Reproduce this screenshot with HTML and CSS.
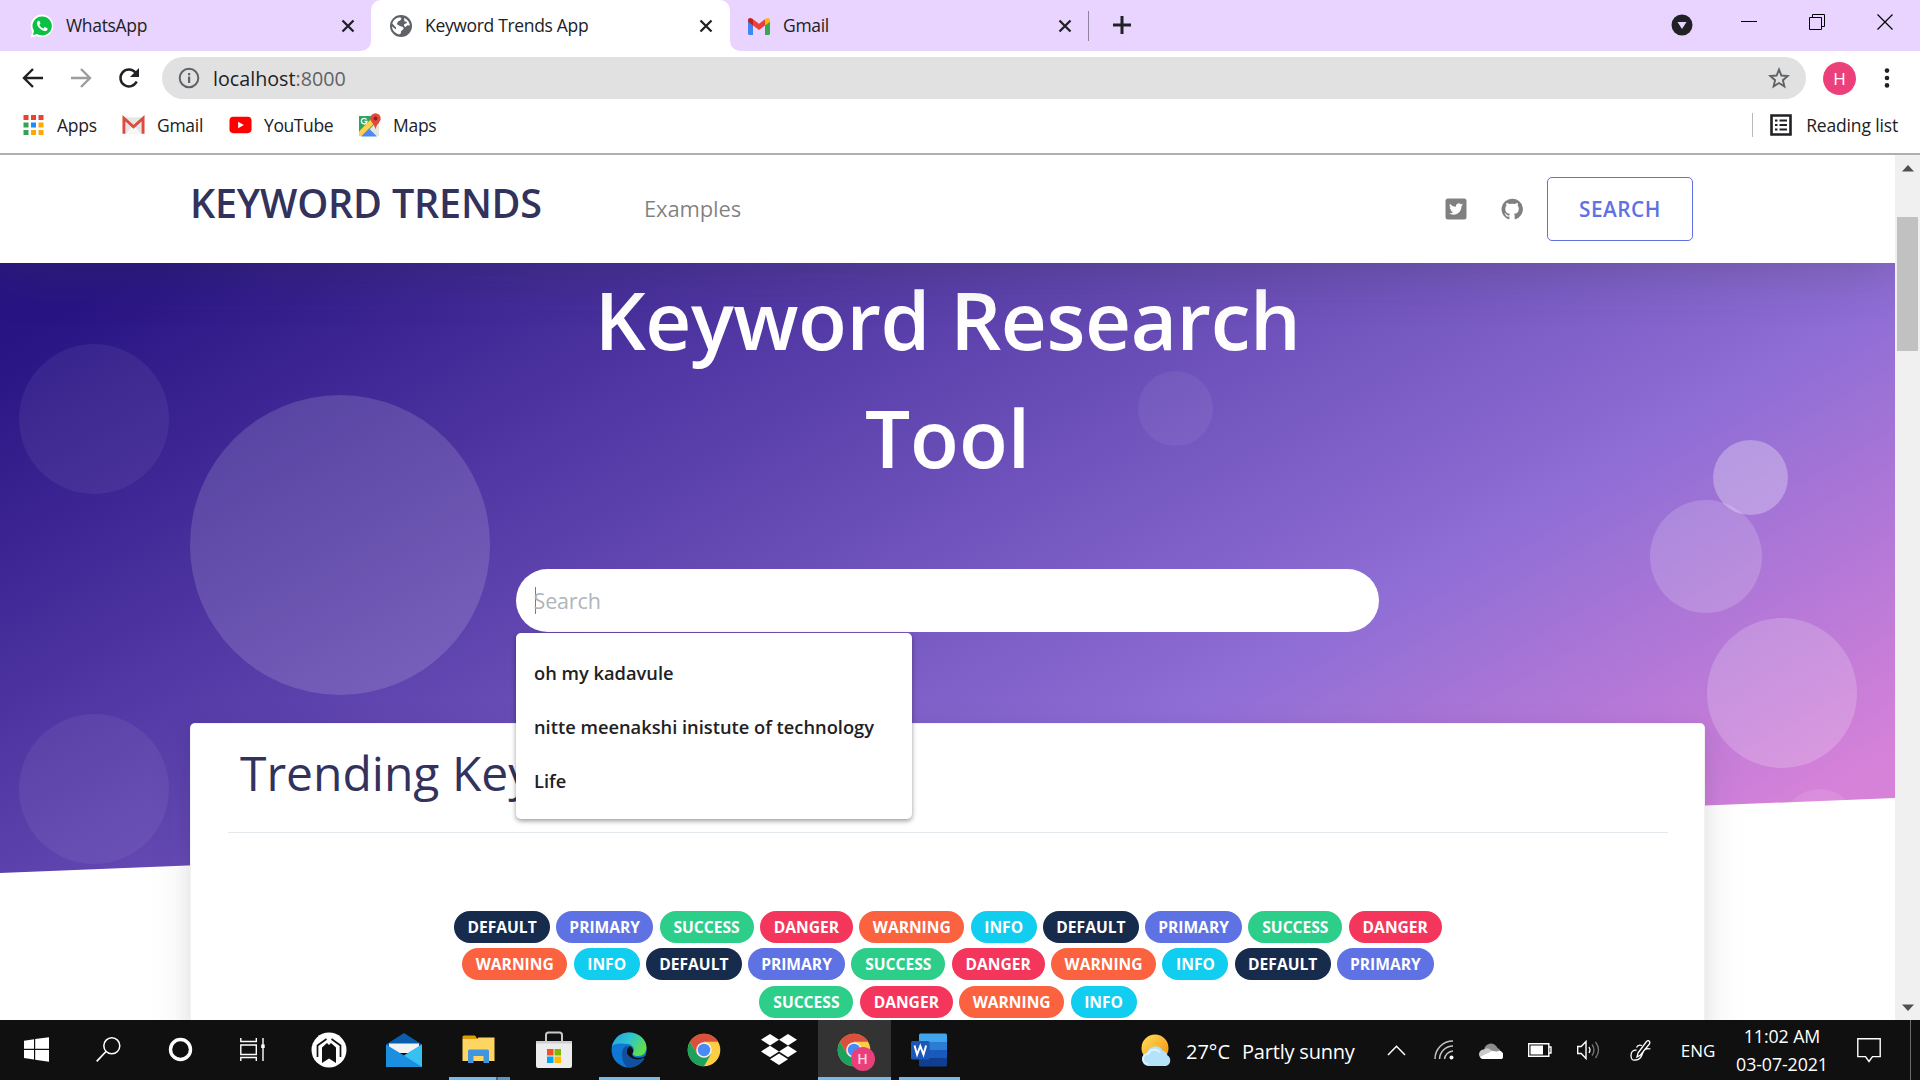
FILE: index.html
```html
<!DOCTYPE html>
<html lang="en">
<head>
<meta charset="utf-8">
<title>Keyword Trends App</title>
<link rel="stylesheet" href="styles.css">
</head>
<body>
<svg class="defs" width="0" height="0">
  <defs>
    <symbol id="close" viewBox="0 0 14 14"><path d="M1.5 1.5l11 11M12.500 1.500l-11 11" fill="none" stroke="#202124" stroke-width="2.300"/></symbol>
    <symbol id="chrome" viewBox="0 0 48 48">
      <circle cx="24" cy="24" r="23" fill="#ffcd42"/>
      <path d="M4.100 12.500A23 23 0 0 1 43.900 12.500H24L14 29.800z" fill="#d9503f"/>
      <path d="M4.100 12.500A23 23 0 0 0 24 47L34 29.800 24 34 14 29.800z" fill="#1da15f"/>
      <circle cx="24" cy="24" r="11" fill="#f1f1f1"/>
      <circle cx="24" cy="24" r="8.800" fill="#4a8af4"/>
    </symbol>
  </defs>
</svg>

<header class="tabstrip">
  <div class="tab tab-first">
    <svg class="favicon" viewBox="0 0 24 24"><path d="M12 .5A11.300 11.300 0 0 0 2.400 17.800L.6 23.600l6-1.600A11.400 11.400 0 1 0 12 .5z" fill="#fff"/><path d="M12 2.400a9.500 9.500 0 0 0-8 14.500L3 21l4.200-1.100A9.500 9.500 0 1 0 12 2.400z" fill="#0ac144"/><path d="M8.600 6.800c-.4 0-1.700.8-1.700 2.500 0 3 4.500 7.800 8.200 7.800 1.400 0 2.500-1 2.500-2.400 0-.4-2.500-1.700-2.900-1.600-.5.100-1 1.400-1.400 1.400-1 0-3.500-2.300-3.900-3.500 0-.5 1-1 1-1.600 0-.4-.9-2.600-1.300-2.600z" fill="#fff"/></svg>
    <span class="tab-title">WhatsApp</span>
    <svg class="close"><use href="#close"/></svg>
  </div>
  <div class="tab tab-active">
    <svg class="favicon" viewBox="0 0 24 24"><circle cx="12" cy="12" r="11" fill="#5f6368"/><path d="M11 3.500c2.500 0 1 3-1 3.500-2 .4-1 2.500-2.500 3L11 12c1.500 1 3 0 3.500 2s-2.500 2-2.500 4-1 2.500-2.500 2.300C6 19 3 16 3 12.500l4 3v-2L3.300 9.500C4.500 6 7 3.500 11 3.500z" fill="#fff"/><path d="M15 4c3 1 5.500 4 5.900 7.500l-2.400-.3-2 1.800c-1.500-.5-2-2-1-3l2.500-1c.3-1.500-1.500-1.500-2.500-1.500z" fill="#fff"/></svg>
    <span class="tab-title">Keyword Trends App</span>
    <svg class="close"><use href="#close"/></svg>
  </div>
  <div class="tab tab-last">
    <svg class="favicon" viewBox="0 0 24 24"><path d="M1 7v12.500c0 .8.600 1.500 1.500 1.500H6V10z" fill="#4285f4"/><path d="M23 7v12.500c0 .8-.6 1.500-1.500 1.500H18V10z" fill="#34a853"/><path d="M6 5.300v6.200l6 4.500 6-4.500V5.300l-6 4.500z" fill="#ea4335"/><path d="M1 5.800v2L6 11.500V5.300l-1-.8c-1.600-1.200-4-.3-4 1.300z" fill="#c5221f"/><path d="M23 5.800v2l-5 3.700V5.300l1-.8c1.600-1.200 4-.3 4 1.300z" fill="#fbbc04"/></svg>
    <span class="tab-title">Gmail</span>
    <svg class="close"><use href="#close"/></svg>
  </div>
  <svg class="new-tab" viewBox="0 0 18 18"><path d="M9 0v18M0 9h18" stroke="#202124" stroke-width="3" fill="none"/></svg>
  <div class="window-controls">
    <svg width="22" height="22" viewBox="0 0 22 22"><circle cx="11" cy="11" r="10.500" fill="#202124"/><path d="M6.500 8h9L11 15z" fill="#e8d4ff"/></svg>
    <svg class="wc" viewBox="0 0 16 16"><path d="M0 7.500h16" stroke="#000" stroke-width="1"/></svg>
    <svg class="wc" viewBox="0 0 16 16"><path d="M.5 3.500h12v12H.5zM3.500 3.500v-3h12v12h-3" fill="none" stroke="#000" stroke-width="1"/></svg>
    <svg class="wc" viewBox="0 0 16 16"><path d="M.5.5l15 15M15.500.5l-15 15" stroke="#000" stroke-width="1.200"/></svg>
  </div>
</header>

<div class="toolbar">
  <svg class="nav-icon" viewBox="0 0 22 22"><path d="M21 11H2.500M11 2l-9 9 9 9" fill="none" stroke="#202124" stroke-width="2.400"/></svg>
  <svg class="nav-icon" viewBox="0 0 22 22"><path d="M1 11h18.500M11 2l9 9-9 9" fill="none" stroke="#9d9d9f" stroke-width="2.400"/></svg>
  <svg class="nav-icon" viewBox="0 0 22 22"><path d="M18.700 14.500A8.500 8.500 0 1 1 17.500 5.500" fill="none" stroke="#202124" stroke-width="2.500"/><path d="M21 1v9h-9z" fill="#202124"/></svg>
  <div class="omnibox">
    <svg width="22" height="22" viewBox="0 0 22 22"><circle cx="11" cy="11" r="9.300" fill="none" stroke="#5f6368" stroke-width="2"/><path d="M10 9.500h2.200V16H10zM10 6h2.200v2.200H10z" fill="#5f6368"/></svg>
    <span class="url">localhost<span class="port">:8000</span></span>
    <svg class="star" width="22" height="22" viewBox="0 0 22 22"><path d="M11 2.600l2.400 5.900 6.400.5-4.900 4.200 1.500 6.200L11 16l-5.400 3.400 1.500-6.200L2.200 9l6.400-.5z" fill="none" stroke="#5f6368" stroke-width="1.900"/></svg>
  </div>
  <span class="avatar">H</span>
  <svg width="6" height="20" viewBox="0 0 6 20"><g fill="#202124"><circle cx="3" cy="2.600" r="2.300"/><circle cx="3" cy="10" r="2.300"/><circle cx="3" cy="17.400" r="2.300"/></g></svg>
</div>

<div class="bookmarks">
  <div class="bookmark bm-apps">
    <svg viewBox="0 0 22 22"><g fill="#ea4335"><path d="M1 1h5v5H1zM8.500 1h5v5h-5zM16 1h5v5h-5z"/></g><path d="M1 8.500h5v5H1zM1 16h5v5H1z" fill="#34a153"/><path d="M8.500 8.500h5v5h-5z" fill="#1a8cff"/><path d="M16 8.500h5v5h-5zM8.500 16h5v5h-5zM16 16h5v5h-5z" fill="#fba904"/></svg>Apps</div>
  <div class="bookmark bm-gmail">
    <svg viewBox="0 0 24 22"><path d="M2 3h20v17H2z" fill="#e6e6e6"/><path d="M4 20l8-9 8 9z" fill="#f7f7f7"/><path d="M2 20V4l10 9 10-9v16" fill="none" stroke="#dd4b3e" stroke-width="3"/></svg>Gmail</div>
  <div class="bookmark bm-youtube">
    <svg viewBox="0 0 24 22"><rect x=".5" y="2.500" width="23" height="17" rx="4" fill="#f00"/><path d="M9.500 7.500v7l6-3.500z" fill="#fff"/></svg>YouTube</div>
  <div class="bookmark bm-maps">
    <svg viewBox="0 0 23 24"><path d="M1 3h20v20H1z" fill="#2da562"/><path d="M6 23L19 8l2 3v12z" fill="#e8e6df"/><path d="M1 18.500L16 3l4 3L4.500 23H1z" fill="#ffd04b"/><path d="M3 23.500l8-8 8 8z" fill="#4a8af4"/><path d="M8.500 6.500A2.800 2.800 0 1 0 9 8.500H6.500" fill="none" stroke="#fff" stroke-width="1.400"/><path d="M17.500.3a5.200 5.200 0 0 0-5.200 5.200c0 3.500 4.200 5 5.200 11 1-6 5.200-7.500 5.200-11A5.200 5.200 0 0 0 17.500.3z" fill="#e2483d"/><circle cx="17.500" cy="5.500" r="1.900" fill="#8c241e"/></svg>Maps</div>
  <div class="reading">
    <svg width="22" height="22" viewBox="0 0 22 22"><path d="M1.500 1.500h19v19h-19z" fill="none" stroke="#202124" stroke-width="2.600"/><path d="M5 6.500h2.500M5 11h2.500M5 15.500h2.500M9.500 6.500H17M9.500 11H17M9.500 15.500H17" stroke="#202124" stroke-width="2.200"/></svg>
    Reading list</div>
</div>

<main class="viewport">
  <div class="page">
    <nav class="navbar">
      <h2 class="brand">KEYWORD TRENDS</h2>
      <a class="nav-link">Examples</a>
      <div class="nav-right">
        <svg width="22" height="22" viewBox="0 0 22 22"><rect x=".5" y=".5" width="21" height="21" rx="2.500" fill="#808080"/><path d="M18 6.600c-.5.200-1 .4-1.600.5.600-.4 1-.9 1.200-1.600-.5.300-1.100.6-1.800.7a2.900 2.900 0 0 0-4.900 2.600C8.500 8.700 6.400 7.600 5 5.800c-.8 1.300-.4 3 .9 3.800-.5 0-.9-.1-1.300-.4 0 1.400 1 2.600 2.300 2.900-.4.100-.9.100-1.300 0 .4 1.200 1.400 2 2.700 2-1.200.9-2.700 1.400-4.300 1.200 5.600 3.400 12.600 0 12.500-7.200.6-.4 1.100-.9 1.500-1.500z" fill="#fff"/></svg>
        <svg width="22" height="22" viewBox="0 0 24 24"><path d="M12 .7a11.500 11.500 0 0 0-3.600 22.400c.6.100.8-.2.800-.6v-2.200c-3.200.7-3.900-1.300-3.900-1.300-.5-1.300-1.300-1.700-1.300-1.700-1-.7.100-.7.100-.7 1.200.1 1.800 1.200 1.800 1.200 1 1.800 2.700 1.300 3.300 1 .1-.8.400-1.300.7-1.600-2.500-.3-5.200-1.300-5.200-5.600 0-1.300.4-2.300 1.200-3.100-.1-.3-.5-1.500.1-3.100 0 0 1-.3 3.200 1.200a11 11 0 0 1 5.700 0c2.200-1.500 3.200-1.200 3.200-1.200.6 1.600.2 2.800.1 3.100.7.800 1.200 1.800 1.200 3.100 0 4.400-2.700 5.300-5.300 5.600.4.400.8 1.100.8 2.200v3.200c0 .3.200.7.800.6A11.500 11.500 0 0 0 12 .7z" fill="#808080"/></svg>
        <a class="btn">SEARCH</a>
      </div>
    </nav>

    <section class="hero">
      <div class="shapes">
        <span class="s1"></span><span class="s2"></span><span class="s3"></span><span class="s4"></span>
        <span class="s5"></span><span class="s6"></span><span class="s7"></span><span class="s8"></span>
      </div>
      <svg class="skew" viewBox="0 0 2560 100" preserveAspectRatio="none"><path d="M2560 0v100H0z" fill="#fff"/></svg>
      <h1 class="title"><span class="title-line">Keyword Research</span><br>Tool</h1>
      <div class="search">
        <span class="placeholder">Search</span>
        <ul class="suggestions">
          <li>oh my kadavule</li>
          <li>nitte meenakshi inistute of technology</li>
          <li>Life</li>
        </ul>
      </div>
    </section>

    <section class="card">
      <h2 class="card-title">Trending Key</h2>
      <hr class="rule">
      <div class="badges">
        <div class="badge-row">
          <span class="badge default">DEFAULT</span><span class="badge primary">PRIMARY</span><span class="badge success">SUCCESS</span><span class="badge danger">DANGER</span><span class="badge warning">WARNING</span><span class="badge info">INFO</span><span class="badge default">DEFAULT</span><span class="badge primary">PRIMARY</span><span class="badge success">SUCCESS</span><span class="badge danger">DANGER</span>
        </div>
        <div class="badge-row">
          <span class="badge warning">WARNING</span><span class="badge info">INFO</span><span class="badge default">DEFAULT</span><span class="badge primary">PRIMARY</span><span class="badge success">SUCCESS</span><span class="badge danger">DANGER</span><span class="badge warning">WARNING</span><span class="badge info">INFO</span><span class="badge default">DEFAULT</span><span class="badge primary">PRIMARY</span>
        </div>
        <div class="badge-row">
          <span class="badge success">SUCCESS</span><span class="badge danger">DANGER</span><span class="badge warning">WARNING</span><span class="badge info">INFO</span>
        </div>
      </div>
    </section>
  </div>
  <div class="scrollbar">
    <svg class="sb-arrow" viewBox="0 0 12 7"><path d="M0 6.500L6 0l6 6.500z" fill="#505050"/></svg>
    <div class="thumb"></div>
    <svg class="sb-arrow sb-down" viewBox="0 0 12 7"><path d="M0 .5L6 7l6-6.500z" fill="#505050"/></svg>
  </div>
</main>

<footer class="taskbar">
  <div class="tb"><svg width="25" height="25" viewBox="0 0 25 25"><path d="M0 3.700L10 2.300v9.500H0zM11.200 2.100L25 .2v11.600H11.200zM0 13h10v9.500L0 21.100zM11.200 13H25v11.700l-13.800-1.900z" fill="#fff"/></svg></div>
  <div class="tb"><svg width="25" height="25" viewBox="0 0 25 25"><circle cx="15.800" cy="8.800" r="8" fill="none" stroke="#fff" stroke-width="1.500"/><path d="M10 14.500L.7 24.300" stroke="#fff" stroke-width="1.700"/></svg></div>
  <div class="tb"><svg width="25" height="25" viewBox="0 0 25 25"><circle cx="12.500" cy="12.500" r="10" fill="none" stroke="#fff" stroke-width="3.400"/></svg></div>
  <div class="tb"><svg width="25" height="25" viewBox="0 0 25 25"><path d="M.8 1v3.500h15.500V1M.8 24v-3.500h15.500V24M.8 8h15.500v9.500H.8zM23 1v23" fill="none" stroke="#fff" stroke-width="1.400"/><path d="M21.200 7.500h3.500V11h-3.500z" fill="#fff"/></svg></div>
  <div class="tb tb-wide tb-gap"><svg width="36" height="36" viewBox="0 0 36 36"><circle cx="18" cy="18" r="17.500" fill="#fff"/><path d="M6.500 25V13.500L15.500 7M29.500 25V13.500L20.500 7" fill="none" stroke="#111" stroke-width="1.700"/><path d="M9.800 28V15.200L18 8.500l8.200 6.700V28" fill="none" stroke="#fff" stroke-width="1.500"/><path d="M11 15.500l5-4.500 2 2 2-2 5 4.500V31l-7-4.500-7 4.500z" fill="#111"/></svg></div>
  <div class="tb tb-wide"><svg width="36" height="34" viewBox="0 0 36 34"><path d="M0 11.500L18 0l18 11.500V15H0z" fill="#0a5cad"/><path d="M3 10.500h30V20H3z" fill="#f3f3f3"/><path d="M0 11.500l18 11 18-11V34H0z" fill="#1b8fe0"/><path d="M36 11.500V34L18 22.500z" fill="#36c1f2"/></svg></div>
  <div class="tb tb-wide running explorer"><svg width="33" height="30" viewBox="0 0 33 30"><path d="M.5 2Q.5.5 2 .5h11l2.500 3.500H.5z" fill="#dd9c05"/><path d="M.5 4H15l1.500-1.500H32.500V26H.5z" fill="#ffd561"/><path d="M6 28V16q0-1.500 1.500-1.500h18Q27 14.500 27 16v12h-5.500v-7h-10v7z" fill="#3f95e0"/></svg></div>
  <div class="tb tb-wide"><svg width="36" height="38" viewBox="0 0 36 38"><path d="M10 12V4q0-2.500 2.500-2.500h11Q26 1.500 26 4v8" fill="none" stroke="#c9c9c9" stroke-width="2"/><path d="M0 10h36v25q0 2-2 2H2q-2 0-2-2z" fill="#ededed"/><path d="M0 10h36v2.500H0z" fill="#cfcfcf"/><path d="M11 18h6.500v6.500H11z" fill="#f25022"/><path d="M18.500 18H25v6.500h-6.500z" fill="#7fba00"/><path d="M11 25.500h6.500V32H11z" fill="#00a4ef"/><path d="M18.500 25.500H25V32h-6.500z" fill="#ffb900"/></svg></div>
  <div class="tb tb-wide running"><svg width="36" height="36" viewBox="0 0 36 36"><defs><linearGradient id="eg" x1="0" y1="0" x2="1" y2=".5"><stop offset="0" stop-color="#2a9ddb"/><stop offset=".5" stop-color="#2cc3d2"/><stop offset="1" stop-color="#5fe04d"/></linearGradient></defs><circle cx="18" cy="18" r="17.500" fill="#0f78d4"/><path d="M1 14C4 4 11 .5 18 .5 28 .5 35.500 7.500 35.500 15.500c0 5-3.500 8.500-8.500 8.500-4 0-6-1.500-5-3 2-3 1-8-5-9C11 11 4 11 1 14z" fill="url(#eg)"/><path d="M11 22c0-5 3-8.500 7-8.500-2.500 2-3.500 5-2 8 3 6 10 7 17 4.500-2 5-8 9.500-14 9.500-5 0-8-6-8-13.500z" fill="#11509c"/><path d="M16 21.500c-1-3 .3-6.300 3-7.500 3 1.500 4 5 2.500 7.500-1 2 1.500 4 6 4.300 3.500.2 6.500-1.300 9.500-3.800v5l-4-1c-7 3-14 1-17-4.500z" fill="#101010"/></svg></div>
  <div class="tb tb-wide"><svg width="34" height="34"><use href="#chrome"/></svg></div>
  <div class="tb tb-wide"><svg width="36" height="32" viewBox="0 0 36 32"><path d="M9 0l9 5.700-9 5.700-9-5.700zM27 0l9 5.700-9 5.700-9-5.700zM9 11.800l9 5.700-9 5.700-9-5.700zM27 11.800l9 5.700-9 5.700-9-5.700zM18 19.500l9 5.700-9 5.800-9-5.800z" fill="#fff"/></svg></div>
  <div class="tb tb-wide running current"><span class="chrome-profile"><svg width="34" height="34"><use href="#chrome"/></svg><span class="profile-badge">H</span></span></div>
  <div class="tb tb-wide running"><svg width="36" height="34" viewBox="0 0 36 34"><path d="M8 2q0-1.500 1.500-1.500h25Q36 .5 36 2v7H8z" fill="#41a5ee"/><path d="M8 9h28v8H8z" fill="#2b7cd3"/><path d="M8 17h28v8H8z" fill="#185abd"/><path d="M8 25h28v7q0 1.500-1.500 1.500h-25Q8 33.500 8 32z" fill="#103f91"/><rect y="8" width="18.500" height="18.500" rx="1.500" fill="#1b57b8"/><path d="M3.500 12.500l2.600 9 3.200-8.500 3.200 8.500 2.600-9" fill="none" stroke="#fff" stroke-width="2"/></svg></div>

  <div class="tray">
    <svg width="38" height="36" viewBox="0 0 38 36"><defs><linearGradient id="sun" x1="0" y1="0" x2="1" y2="1"><stop offset="0" stop-color="#ffdf5a"/><stop offset="1" stop-color="#f78d0a"/></linearGradient></defs><circle cx="19" cy="16" r="13.500" fill="url(#sun)"/><path d="M12 34a7 7 0 0 1-1-13.500 8.500 8.500 0 0 1 15.500-2 6.500 6.500 0 0 1 5 5A5.800 5.800 0 0 1 30 34z" fill="#b5e2fb"/><path d="M12 32a5 5 0 0 1 0-10 7 7 0 0 1 12-1.500" fill="none" stroke="#dff3fe" stroke-width="2"/></svg>
    <span class="temp">27°C</span><span class="sky">Partly sunny</span>
    <div class="ti w46"><svg width="19" height="11" viewBox="0 0 19 11"><path d="M1 10l8.500-8.700L18 10" fill="none" stroke="#fff" stroke-width="1.500"/></svg></div>
    <div class="ti w50"><svg width="20" height="20" viewBox="0 0 20 20"><path d="M1 19A18 18 0 0 1 19 1M5.500 19A13.500 13.500 0 0 1 19 6M10.500 19A9 9 0 0 1 19 11" fill="none" stroke="#c4c4c4" stroke-width="1.500"/><circle cx="17.500" cy="17.500" r="2" fill="#fff"/></svg></div>
    <div class="ti w44"><svg width="24" height="17" viewBox="0 0 24 17"><path d="M5 9a7 7 0 0 1 13.500-3A6 6 0 0 1 18 17H8z" fill="#8d8d8d"/><path d="M4.500 17A4.500 4.500 0 0 1 5 7.500a5.500 5.500 0 0 1 7 .5l9 6z" fill="#c9c9c9"/><path d="M4 16.900Q2 16.500 1 15l12-6 5 .5a4.500 4.500 0 0 1 5 7.400z" fill="#fff"/></svg></div>
    <div class="ti w54"><svg width="24" height="14" viewBox="0 0 24 14"><path d="M.7.700h20.100v12.600H.7zM21 4h2v6h-2" fill="none" stroke="#fff" stroke-width="1.400"/><path d="M2.500 2.500H15v9H2.500z" fill="#fff"/></svg></div>
    <div class="ti w42"><svg width="23" height="20" viewBox="0 0 23 20"><path d="M.7 6.500h3.500L9 1.500v17l-4.800-5H.7z" fill="none" stroke="#fff" stroke-width="1.400"/><path d="M12 7q2 3 0 6" fill="none" stroke="#fff" stroke-width="1.300"/><path d="M15 4.500q4 5.500 0 11M18.500 2q6 8 0 16" fill="none" stroke="#777" stroke-width="1.300"/></svg></div>
    <div class="ti w64"><svg width="22" height="22" viewBox="0 0 22 22"><path d="M8 14L16.500 2.500q1.800-1.600 3 0 .8 1.500-.5 3L10.500 16 7 18zM12 6.500Q8 5 6.500 8.500M6.500 11Q1 11 1 16.500t4.500 4.500q5 0 7-6.500t8-4.500" fill="none" stroke="#fff" stroke-width="1.300"/></svg></div>
    <div class="ti w50 lang">ENG</div>
    <div class="clock"><span>11:02 AM</span><span>03-07-2021</span></div>
    <div class="ti w56"><svg width="24" height="25" viewBox="0 0 24 25"><path d="M.8.8h22.400v17.800h-7.700L12 23.500l-3.500-4.900H.8z" fill="none" stroke="#fff" stroke-width="1.400"/></svg></div>
    <div class="peek"></div>
  </div>
</footer>
</body>
</html>
```
FILE: styles.css
```css
* { box-sizing: border-box; }
body {
  margin: 0; width: 1920px; height: 1080px; overflow: hidden;
  display: flex; flex-direction: column;
  font-family: "Open Sans", "Noto Sans", sans-serif;
  background: #fff; color: #202124;
}
svg { display: block; flex: none; }
h1, h2, ul { margin: 0; padding: 0; }
.defs { position: absolute; }

/* Tab strip */
.tabstrip {
  height: 51px; flex: none; display: flex; background: #e8d4ff;
  font-size: 17.5px; letter-spacing: -0.33px;
}
.tab { display: flex; align-items: center; height: 51px; flex: none; }
.favicon { width: 24px; height: 24px; }
.tab-title { margin-left: 12px; flex: 1; white-space: nowrap; padding-bottom: 1px; }
.close { width: 14px; height: 14px; }
.tab-first { width: 371px; padding: 0 16px 0 30px; background: #e8d4ff; border-radius: 0 0 10px 0; z-index: 1; }
.tab-active {
  width: 359px; padding: 0 17px 0 18px; background: #fff; border-radius: 10px 10px 0 0;
  box-shadow: -10px 41px 0 0 #fff, 10px 41px 0 0 #fff;
}
.tab-last {
  width: 360px; padding: 0 18px 0 17px; background: #e8d4ff; border-radius: 0 0 0 10px;
  z-index: 1; position: relative;
}
.tab-last::after { content: ""; position: absolute; right: 1px; top: 11px; width: 1px; height: 30px; background: #8f829d; }
.new-tab { width: 18px; height: 18px; margin: 16px 0 0 23px; }
.window-controls { margin-left: auto; display: flex; align-items: flex-start; padding: 14px 27px 0 0; }
.wc { width: 16px; height: 16px; margin-left: 52px; }
.window-controls .wc:nth-child(2) { margin-left: 48px; }

/* Address bar */
.toolbar {
  height: 54px; flex: none; display: flex; align-items: center;
  padding: 0 30px 0 22px; background: #fff; position: relative; z-index: 2;
}
.nav-icon { width: 22px; height: 22px; margin-right: 26px; }
.nav-icon:nth-child(3) { margin-right: 22px; }
.omnibox {
  width: 1645px; height: 42px; border-radius: 21px; background: #e1e1e1;
  display: flex; align-items: center; padding: 0 16px; margin-right: 17px;
}
.url { margin-left: 13px; font-size: 19.700px; }
.port { color: #5f6368; }
.star { margin-left: auto; }
.avatar {
  width: 33px; height: 33px; border-radius: 50%; background: #ec407a; color: #fff;
  display: flex; align-items: center; justify-content: center; font-size: 17px; margin-right: 28px;
}

/* Bookmarks bar */
.bookmarks {
  height: 50px; flex: none; display: flex; align-items: center; padding: 0 22px 8px;
  border-bottom: 2px solid #b0b0b0; font-size: 17.500px; letter-spacing: -0.28px;
}
.bookmark { display: flex; align-items: center; gap: 12px; flex: none; white-space: nowrap; }
.bookmark svg { width: 23px; height: 22px; }
.bm-apps { width: 100px; }
.bm-gmail { width: 107px; }
.bm-youtube { width: 129px; letter-spacing: -0.4px; }
.bm-maps svg { height: 24px; }
.reading {
  margin-left: auto; display: flex; align-items: center; gap: 14px;
  border-left: 1px solid #b9b9b9; padding-left: 17px; height: 24px; white-space: nowrap;
  letter-spacing: -0.15px;
}

/* Web page */
.viewport { height: 865px; flex: none; display: flex; overflow: hidden; }
.page { width: 1895px; height: 865px; overflow: hidden; background: #fff; }
.navbar {
  height: 108px; background: #fff; position: relative; z-index: 10;
  display: flex; padding: 0 202px 0 190px;
  box-shadow: 0 0 60px rgba(60, 60, 60, .32);
}
.brand {
  width: 454px; font-size: 39.500px; font-weight: 600; color: #32325d; line-height: 54px;
  margin-top: 21px; white-space: nowrap; letter-spacing: -0.2px;
}
.nav-link { font-size: 22px; line-height: 30px; margin-top: 38px; color: rgba(0, 0, 0, .5); letter-spacing: -0.15px; }
.nav-right { margin-left: auto; display: flex; align-items: center; }
.nav-right svg { margin-right: 34px; }
.nav-right svg + svg { margin-right: 24px; }
.btn {
  width: 146px; height: 64px; border: 1px solid #5e72e4; border-radius: 5px; color: #5e72e4;
  display: flex; align-items: center; justify-content: center;
  font-size: 20.800px; font-weight: 600; letter-spacing: 0.5px;
}
.hero {
  position: relative; height: 811px; margin-top: -201px; padding-top: 198px;
  background: linear-gradient(150deg, #281483 15%, #8f6ed5 70%, #d782d9 94%);
}
.shapes { position: absolute; inset: 0; overflow: hidden; }
.shapes span { position: absolute; border-radius: 50%; background: rgba(255, 255, 255, .06); }
.shapes .s1 { left: 19px; top: 282px; width: 150px; height: 150px; }
.shapes .s2 { left: 190px; top: 333px; width: 300px; height: 300px; background: rgba(255, 255, 255, .14); }
.shapes .s3 { left: 19px; top: 652px; width: 150px; height: 150px; }
.shapes .s4 { left: 1138px; top: 309px; width: 75px; height: 75px; }
.shapes .s5 { left: 1713px; top: 378px; width: 75px; height: 75px; background: rgba(255, 255, 255, .29); }
.shapes .s6 { left: 1650px; top: 438px; width: 112px; height: 113px; background: rgba(255, 255, 255, .17); }
.shapes .s7 { left: 1707px; top: 556px; width: 150px; height: 150px; background: rgba(255, 255, 255, .19); }
.shapes .s8 { left: 1782px; top: 727px; width: 75px; height: 75px; background: rgba(255, 255, 255, .1); }
.skew { position: absolute; left: 0; bottom: 0; width: 1895px; height: 75px; }
.title { position: relative; font-size: 80px; line-height: 118px; font-weight: 600; color: #fff; text-align: center; }
.title-line { letter-spacing: -0.45px; }
.search {
  position: relative; width: 863px; height: 63px; margin: 73px 0 0 516px;
  background: #fff; border-radius: 32px; display: flex; align-items: center; padding: 0 0 1px 18.500px;
}
.placeholder { font-size: 21.500px; line-height: 27px; color: #adb5bd; border-left: 1px solid #6d7f98; text-indent: -2px; letter-spacing: -0.15px; }
.suggestions {
  position: absolute; z-index: 5; left: 0; top: 64px; width: 396px; height: 186px;
  background: #fff; border-radius: 5px; padding: 13px 0 0 18px; list-style: none;
  box-shadow: 0 2px 5px rgba(0, 0, 0, .4);
}
.suggestions li { font-size: 18.300px; line-height: 54px; font-weight: 600; white-space: nowrap; }

.card {
  position: relative; z-index: 1; width: 1515px; height: 400px; margin: -150px 0 0 190px; padding: 19px 36px 0 37px;
  background: #fff; border: 1px solid rgba(0, 0, 0, .05); border-radius: 5px;
  box-shadow: 0 19px 44px rgba(50, 50, 93, .1), 0 6px 19px rgba(0, 0, 0, .07);
}
.card-title { font-size: 48px; font-weight: 400; line-height: 60px; color: #32325d; padding-left: 12px; }
.rule { border: 0; border-top: 1px solid #e4e9ee; margin: 29px 0 78px; }
.badges { display: flex; flex-direction: column; gap: 5.300px; }
.badge-row { display: flex; justify-content: center; gap: 6.400px; height: 32px; }
.badge {
  height: 32px; border-radius: 16px; color: #fff; font-size: 15.600px; font-weight: 700;
  line-height: 32px; text-align: center; width: 95.700px;
}
.default { background: #172b4d; }
.primary { background: #5e72e4; width: 96.800px; }
.success { background: #2dce89; width: 94px; }
.danger { background: #f5365c; width: 93px; }
.warning { background: #fb6340; width: 105px; }
.info { background: #11cdef; width: 66px; }

.scrollbar { width: 25px; background: #f0f0f0; display: flex; flex-direction: column; align-items: center; padding: 10px 0 9px; }
.sb-arrow { width: 12px; height: 7px; }
.thumb { width: 21px; height: 134px; background: #c1c1c1; margin-top: 45px; }
.sb-down { margin-top: auto; }

/* Taskbar */
.taskbar { height: 60px; flex: none; background: #101010; display: flex; color: #fff; }
.tb { width: 72px; height: 60px; flex: none; display: flex; align-items: center; justify-content: center; position: relative; padding-bottom: 1px; }
.tb-wide { width: 75px; }
.tb-gap { margin-left: 3px; }
.running::after { content: ""; position: absolute; left: 8px; right: 6px; bottom: 0; height: 3px; background: #76b9ed; }
.current::before { content: ""; position: absolute; inset: 0 0 0 2px; background: #333; }
.current::after { left: 2px; right: 0; }
.explorer::after { background: linear-gradient(90deg, #76b9ed 47px, #41688a 47px 49px, #5f94be 49px); }
.chrome-profile { position: relative; z-index: 1; }
.profile-badge {
  position: absolute; left: 14px; top: 14px; width: 24px; height: 24px; border-radius: 50%;
  background: #e9407c; color: #fbd3e1; font-size: 14px; font-weight: 600; line-height: 24px; text-align: center;
}
.tray { margin-left: auto; width: 784px; display: flex; align-items: center; flex: none; }
.temp, .sky { font-size: 20px; white-space: nowrap; flex: none; padding-top: 3px; }
.temp { width: 56px; margin-left: 12px; }
.sky { width: 131px; letter-spacing: -0.2px; }
.ti { display: flex; align-items: center; justify-content: center; flex: none; }
.w42 { width: 42px; } .w44 { width: 44px; } .w46 { width: 46px; } .w50 { width: 50px; }
.w54 { width: 54px; } .w56 { width: 56px; } .w64 { width: 64px; }
.lang { font-size: 17px; }
.clock { width: 118px; display: flex; flex-direction: column; align-items: center; font-size: 17.800px; line-height: 28px; letter-spacing: -0.1px; flex: none; }
.peek { width: 1px; height: 60px; background: #6b6b6b; margin-left: 13px; }
```
